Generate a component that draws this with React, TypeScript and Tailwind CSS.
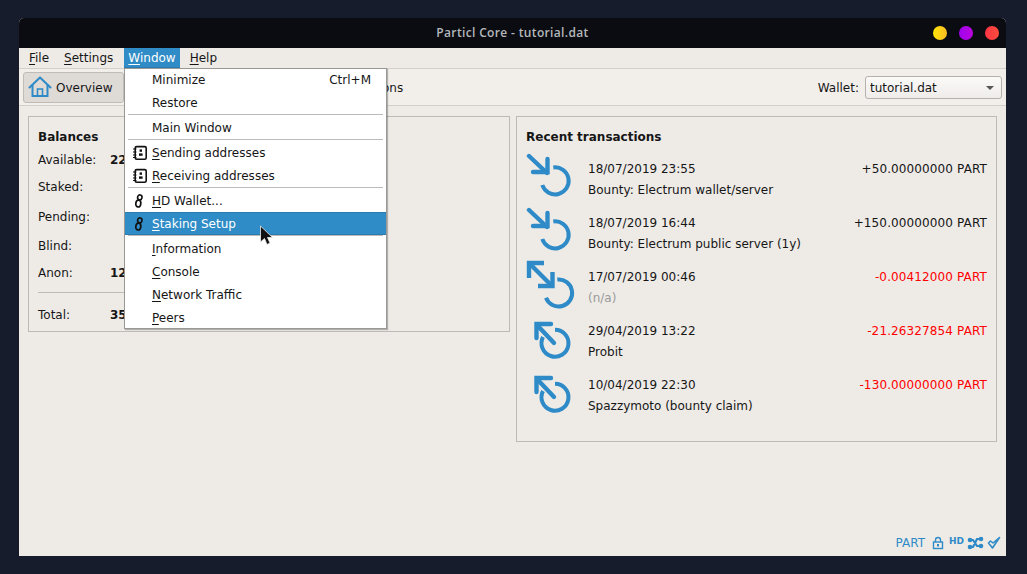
import type { ReactNode } from "react";

const font = "font-['DejaVu_Sans',sans-serif]";

function U({ c, r }: { c: string; r: string }) {
  return (
    <span>
      <span className="underline underline-offset-2">{c}</span>
      {r}
    </span>
  );
}

function TxIcon({ kind }: { kind: "in" | "both" | "out" }) {
  return (
    <svg width="50" height="50" viewBox="0 0 50 50" className="shrink-0">
      <g stroke="#2e8bc8" fill="none" strokeWidth="4.4">
        {kind === "in" && (
          <>
            <path d="M3 4L21 21" strokeLinecap="round" />
            <path d="M7 20H21.5V7" strokeLinecap="round" />
            <path d="M27.3 15.5A13.5 13.5 0 1 1 16.3 33" strokeWidth="4" />
          </>
        )}
        {kind === "both" && (
          <>
            <path d="M5 5L26 26" />
            <path d="M18 3H3V18" />
            <path d="M12 26H26.5V12" />
            <path d="M31.3 19.6A13.5 13.5 0 1 1 20 37.7" strokeWidth="4" />
          </>
        )}
        {kind === "out" && (
          <>
            <path d="M11 11L28 29" strokeLinecap="round" />
            <path d="M25 10H10.5V24" strokeLinecap="round" />
            <path d="M29 15.7A13.5 13.5 0 1 1 17 23" strokeWidth="4" />
          </>
        )}
      </g>
    </svg>
  );
}

function Tx({ kind, date, amount, desc, neg, muted }: { kind: "in" | "both" | "out"; date: string; amount: string; desc: string; neg?: boolean; muted?: boolean }) {
  return (
    <div className="flex h-[54px]">
      <TxIcon kind={kind} />
      <div className="flex-1 ml-[12px] pt-[7px] leading-[21px]">
        <div className="flex justify-between">
          <span>{date}</span>
          <span className={`tracking-[0.12px] ${neg ? "text-[#ff0000]" : ""}`}>{amount}</span>
        </div>
        <div className={muted ? "text-[#9a9a9a]" : ""}>{desc}</div>
      </div>
    </div>
  );
}

function BookIcon() {
  return (
    <svg width="16" height="16" viewBox="0 0 16 16" className="shrink-0">
      <rect x="3.2" y="1.6" width="11" height="12.6" rx="1.5" fill="none" stroke="#111" strokeWidth="1.6" />
      <path d="M1 4H4.5M1 7H4.5M1 10H4.5M1 12.5H4.5" stroke="#111" strokeWidth="1.2" />
      <rect x="7.6" y="4.4" width="2.4" height="2.4" fill="#111" />
      <rect x="7" y="8.4" width="3.6" height="2.4" fill="#111" />
    </svg>
  );
}

function ChainIcon() {
  return (
    <svg width="16" height="16" viewBox="0 0 16 16" className="shrink-0">
      <ellipse cx="7.8" cy="4.4" rx="2.2" ry="2.5" fill="none" stroke="#111" strokeWidth="1.6" transform="rotate(15 7.8 4.4)" />
      <ellipse cx="6.3" cy="10.6" rx="2.5" ry="3.4" fill="none" stroke="#111" strokeWidth="1.7" transform="rotate(10 6.3 10.6)" />
    </svg>
  );
}

function Item({ icon, children, right, active }: { icon?: ReactNode; children: ReactNode; right?: string; active?: boolean }) {
  return (
    <div className={`flex items-center h-[23px] pl-[7px] pr-[15px] ${active ? "bg-[#308cc6] text-white border-y border-[#2a7cb0]" : "text-[#161616]"}`}>
      <span className="w-[20px] flex items-center">{icon}</span>
      <span className="flex-1">{children}</span>
      {right && <span>{right}</span>}
    </div>
  );
}

const Sep = () => <div className="h-px bg-[#bdbbb8] mx-[3px] mb-px" />;

function HouseIcon() {
  return (
    <svg width="24" height="22" viewBox="0 0 24 22">
      <path d="M1.5 11.5L12 1.6L22.5 11.5" fill="none" stroke="#2e8bc8" strokeWidth="2" strokeLinecap="round" strokeLinejoin="round" />
      <path d="M4.5 9V20H19.5V9" fill="none" stroke="#2e8bc8" strokeWidth="2" />
      <path d="M9.5 20V13H14.5V20" fill="none" stroke="#2e8bc8" strokeWidth="1.6" />
    </svg>
  );
}

function BalanceRow({ label, value, h, cls }: { label: string; value?: string; h: string; cls?: string }) {
  return (
    <div className={`flex items-center ${h} ${cls ?? ""}`}>
      <span className="w-[72px]">{label}</span>
      <span className="font-bold">{value}</span>
    </div>
  );
}

function Panel({ className, title, children }: { className: string; title: string; children: ReactNode }) {
  return (
    <section className={`border border-[#bdbbb8] ${className}`}>
      <h2 className="font-bold leading-[15px]">{title}</h2>
      {children}
    </section>
  );
}

export default function App() {
  return (
    <div className={`w-[1027px] h-[574px] overflow-hidden bg-[#171c2d] pt-[18px] pl-[19px] text-[12px] text-[#161616] ${font}`}>
      <div className="relative w-[987px] h-[538px] flex flex-col bg-[#eeebe7] rounded-t-[5px] overflow-hidden">
        <header className="relative h-[30px] shrink-0 bg-[#0b0c11] flex items-center justify-center">
          <span className="font-['Open_Sans',sans-serif] font-semibold text-[12px] tracking-[0.35px] text-[#b4b8bc]">Particl Core - tutorial.dat</span>
          <div className="absolute right-[7px] top-[8px] flex gap-[12px]">
            <span className="w-[14px] h-[14px] rounded-full bg-gradient-to-r from-[#ffe500] to-[#ffbb22]" />
            <span className="w-[14px] h-[14px] rounded-full bg-gradient-to-r from-[#a000ee] to-[#bb00dd]" />
            <span className="w-[14px] h-[14px] rounded-full bg-gradient-to-r from-[#ff3344] to-[#ff4c3c]" />
          </div>
        </header>

        <nav className="h-[20px] shrink-0 flex items-center pl-[5px]">
          <span className="px-[5px]"><U c="F" r="ile" /></span>
          <span className="px-[5px] ml-[5px]"><U c="S" r="ettings" /></span>
          <span className="h-[20px] flex items-center px-[4px] ml-[6px] bg-[#308cc6] text-white border-b border-[#2a7cb0]"><U c="W" r="indow" /></span>
          <span className="px-[5px] ml-[5px]"><U c="H" r="elp" /></span>
        </nav>

        <div className="h-[38px] shrink-0 flex items-center pl-[4px] pr-[4px] border-y border-[#d3cfca] bg-[#f2efeb]">
          <div className="w-[101px] h-[31px] flex items-center gap-[4px] pl-[4px] bg-[#dedad6] border border-[#bfbcb8] rounded-[3px]">
            <HouseIcon />
            <span className="pt-px">Overview</span>
          </div>
          <span className="ml-[258px] pt-px">ons</span>
          <span className="ml-auto mr-[6px] pt-px">Wallet:</span>
          <div className="relative w-[137px] h-[23px] flex items-center pl-[4px] pt-px bg-gradient-to-b from-[#fbfaf9] to-[#efecea] border border-[#b5b2ae] rounded-[3px]">
            tutorial.dat
            <span className="absolute right-[7px] top-[9px] w-0 h-0 border-x-[4px] border-x-transparent border-t-[4px] border-t-[#555]" />
          </div>
        </div>

        <main className="flex-1 flex items-start pt-[10px] pl-[9px] gap-[6px]">
          <Panel className="w-[482px] h-[216px] pl-[9px] pr-[9px] pt-[13px]" title="Balances">
            <div className="mt-[3px]">
              <BalanceRow label="Available:" value="22" h="h-[23px]" />
              <BalanceRow label="Staked:" h="h-[31px]" />
              <BalanceRow label="Pending:" h="h-[29px]" />
              <BalanceRow label="Blind:" h="h-[29px]" />
              <BalanceRow label="Anon:" value="12" h="h-[25px]" />
              <div className="h-px w-[200px] bg-[#bdbbb8] mt-[7px]" />
              <BalanceRow label="Total:" value="35" h="h-[21px]" cls="mt-[11px]" />
            </div>
          </Panel>

          <Panel className="w-[481px] h-[326px] pl-[9px] pr-[9px] pt-[13px]" title="Recent transactions">
            <div className="mt-[7px]">
              <Tx kind="in" date="18/07/2019 23:55" amount="+50.00000000 PART" desc="Bounty: Electrum wallet/server" />
              <Tx kind="in" date="18/07/2019 16:44" amount="+150.00000000 PART" desc="Bounty: Electrum public server (1y)" />
              <Tx kind="both" date="17/07/2019 00:46" amount="-0.00412000 PART" desc="(n/a)" neg muted />
              <Tx kind="out" date="29/04/2019 13:22" amount="-21.26327854 PART" desc="Probit" neg />
              <Tx kind="out" date="10/04/2019 22:30" amount="-130.00000000 PART" desc="Spazzymoto (bounty claim)" neg />
            </div>
          </Panel>
        </main>

        <footer className="absolute right-[5px] bottom-[4px] flex items-center text-[#2e8bc8]">
          <span className="mr-px">PART</span>
          <svg width="14" height="14" viewBox="0 0 14 14" className="ml-[5px]">
            <rect x="2.5" y="6" width="9" height="6.5" fill="none" stroke="#2e8bc8" strokeWidth="1.4" />
            <path d="M4.5 6V4a2.5 2.5 0 0 1 5 0V6" fill="none" stroke="#2e8bc8" strokeWidth="1.4" />
            <rect x="6" y="8" width="2" height="2.5" fill="#2e8bc8" />
          </svg>
          <span className="ml-[4px] font-bold text-[9px] w-[18px] -mt-[3px]">HD</span>
          <svg width="17" height="16" viewBox="0 0 17 16">
            <path d="M3 5H6L10 11H14M3 12H6L10 4H14" fill="none" stroke="#2e8bc8" strokeWidth="2.2" />
            <circle cx="3" cy="5" r="2.3" fill="#2e8bc8" />
            <circle cx="3" cy="12" r="2.3" fill="#2e8bc8" />
            <circle cx="14" cy="4" r="2.3" fill="#2e8bc8" />
            <circle cx="14" cy="11" r="2.3" fill="#2e8bc8" />
          </svg>
          <svg width="14" height="14" viewBox="0 0 14 14" className="ml-[3px]">
            <path d="M1.5 7L5.5 12L12.5 1.5L6 7L3.5 5Z" fill="none" stroke="#2e8bc8" strokeWidth="1.6" strokeLinejoin="round" />
          </svg>
        </footer>

        <div className="absolute left-[105px] top-[50px] w-[263px] bg-white border border-[#9a9895] shadow-[1px_1px_1px_rgba(0,0,0,0.25)]">
          <div className="-mt-px -mb-px">
            <Item right="Ctrl+M">Minimize</Item>
            <Item>Restore</Item>
            <Sep />
            <Item>Main Window</Item>
            <Sep />
            <Item icon={<BookIcon />}><U c="S" r="ending addresses" /></Item>
            <Item icon={<BookIcon />}><U c="R" r="eceiving addresses" /></Item>
            <Sep />
            <Item icon={<ChainIcon />}><U c="H" r="D Wallet..." /></Item>
            <Item active icon={<ChainIcon />}><U c="S" r="taking Setup" /></Item>
            <Sep />
            <Item><U c="I" r="nformation" /></Item>
            <Item><U c="C" r="onsole" /></Item>
            <Item><U c="N" r="etwork Traffic" /></Item>
            <Item><U c="P" r="eers" /></Item>
          </div>
        </div>

        <svg width="16" height="22" viewBox="0 0 16 22" className="absolute left-[240px] top-[207px]">
          <path d="M1.5 1V17L5.5 13.5L8 19.5L11 18L8.5 12.5H13.5Z" fill="#111" stroke="#eee" strokeWidth="0.8" />
        </svg>
      </div>
    </div>
  );
}
